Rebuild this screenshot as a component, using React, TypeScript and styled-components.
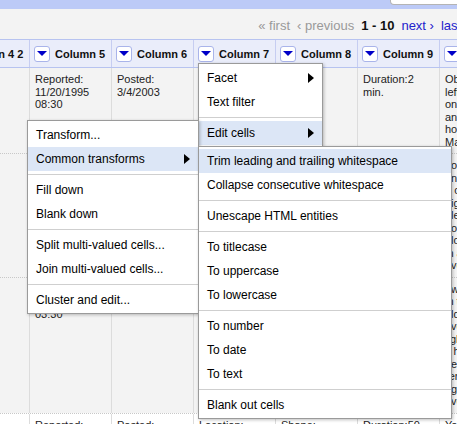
import React from 'react';
import styled, { createGlobalStyle } from 'styled-components';

const GlobalStyle = createGlobalStyle`
  html, body {
    margin: 0;
    padding: 0;
    background: #f3f3f3;
    overflow: hidden;
  }
  body {
    font-family: "Liberation Sans", Arial, sans-serif;
  }
`;

const Viewport = styled.div`
  position: relative;
  width: 480px;
  height: 424px;
  overflow: hidden;
  background: #f3f3f3;
`;

const TopBar = styled.div`
  height: 9px;
  background: #bccaf7;
  display: flex;
  justify-content: flex-end;
`;

const TabStub = styled.div`
  width: 88px;
  height: 4px;
  background: #fff;
  border: 1px solid #b4b4b4;
  border-top: none;
  border-bottom-left-radius: 4px;
`;

const Pager = styled.div`
  height: 30px;
  box-sizing: border-box;
  padding: 2px 8px 0 0;
  display: flex;
  justify-content: flex-end;
  align-items: center;
  gap: 7px;
  font-size: 13px;
  white-space: nowrap;
`;

const PagerLink = styled.span<{ $disabled?: boolean }>`
  color: ${(p) => (p.$disabled ? '#999' : '#2222cc')};
`;

const PagerRange = styled.span`
  font-weight: bold;
  color: #111;
`;

const GRID = '91px repeat(5, 82px) 240px';

const Table = styled.div`
  margin-left: -62px;
  width: 741px;
`;

const HeaderRow = styled.div`
  display: grid;
  grid-template-columns: ${GRID};
  background: #eaedfa;
  border-top: 1px solid #b7c3f0;
  border-bottom: 1px solid #b7c3f0;
`;

const HeaderCell = styled.div`
  height: 27px;
  display: flex;
  align-items: center;
  gap: 5px;
  padding-left: 4px;
  border-left: 1px solid #c6cdf1;
  font-size: 11px;
  font-weight: bold;
  color: #111;
  white-space: nowrap;
`;

const DropButton = styled.span`
  flex: none;
  width: 14px;
  height: 14px;
  background: #fff;
  border: 1px solid #a9b4ea;
  border-radius: 3px;
  display: flex;
  align-items: center;
  justify-content: center;
`;

const DownTriangle = styled.span`
  width: 0;
  height: 0;
  border-left: 5px solid transparent;
  border-right: 5px solid transparent;
  border-top: 5px solid #0000c8;
`;

const DataRow = styled.div<{ $white?: boolean; $dotted?: boolean }>`
  display: grid;
  grid-template-columns: ${GRID};
  background: ${(p) => (p.$white ? '#fff' : '#f3f3f3')};
  border-top: ${(p) => (p.$dotted ? '1px dotted #c8c8c8' : 'none')};
`;

const Cell = styled.div`
  border-left: 1px solid #dcdcdc;
  padding: 5px;
  font-size: 11px;
  line-height: 12.5px;
  color: #222;
  overflow: hidden;
`;

const Line = styled.div`
  white-space: nowrap;
`;

const Menu = styled.div<{ $z: number }>`
  position: absolute;
  box-sizing: border-box;
  background: #fff;
  border: 1px solid #9a9a9a;
  box-shadow: 1px 1px 3px rgba(0, 0, 0, 0.25);
  padding: 2px 0 1px;
  z-index: ${(p) => p.$z};
  font-size: 12px;
  color: #000;
`;

const MenuItem = styled.div<{ $active?: boolean }>`
  height: 24px;
  padding: 0 8px;
  display: flex;
  align-items: center;
  justify-content: space-between;
  white-space: nowrap;
  background: ${(p) => (p.$active ? '#dce6f6' : 'transparent')};
`;

const MenuSeparator = styled.div`
  height: 1px;
  margin: 3px 0;
  background: #cfcfcf;
`;

const RightArrow = styled.span`
  width: 0;
  height: 0;
  border-top: 5px solid transparent;
  border-bottom: 5px solid transparent;
  border-left: 6px solid #000;
`;

type Entry = { label: string; sub?: boolean; active?: boolean } | 'sep';

const columns = ['Column 4 2', 'Column 5', 'Column 6', 'Column 7', 'Column 8', 'Column 9', 'Column 10'];

const rows: { white?: boolean; dotted?: boolean; cells: (string | string[])[] }[] = [
  {
    cells: [
      '',
      'Reported: 11/20/1995 08:30',
      'Posted: 3/4/2003',
      'Location:',
      'Shape:',
      'Duration:2 min.',
      [
        'Observed bright lights',
        'left of the road while',
        'on the way home',
        'and they followed my',
        'house for ten minutes.',
        'Many witnesses saw it.',
      ],
    ],
  },
  {
    dotted: true,
    cells: [
      '',
      '',
      '',
      '',
      '',
      '',
      [
        'police later came by,',
        'unable to explain it.',
        '6 objects in a line,',
        'high above the trees.',
        'electric hum was heard',
        'nothing on radar.',
        'glowing orange disks',
        'in a V formation',
        'every few seconds.',
      ],
    ],
  },
  {
    dotted: true,
    cells: [
      '',
      'Reported: 11/21/1995 03:30',
      'Posted: 3/4/2003',
      'Location:',
      'Shape:',
      'Duration:10 min.',
      [
        'I was driving north',
        'in the rain on the',
        'old highway when I',
        'eventually pulled over.',
        'light got brighter',
        'it hovered silently',
        'near the water tower',
        'remained for a while',
        'right before dawn',
        'over the field.',
      ],
    ],
  },
  {
    white: true,
    dotted: true,
    cells: ['', 'Reported:', 'Posted:', 'Location:', 'Shape:', 'Duration:50', ['You won’t believe this']],
  },
];

const columnMenu: Entry[] = [
  { label: 'Facet', sub: true },
  { label: 'Text filter' },
  'sep',
  { label: 'Edit cells', sub: true, active: true },
];

const editCellsMenu: Entry[] = [
  { label: 'Transform...' },
  { label: 'Common transforms', sub: true, active: true },
  'sep',
  { label: 'Fill down' },
  { label: 'Blank down' },
  'sep',
  { label: 'Split multi-valued cells...' },
  { label: 'Join multi-valued cells...' },
  'sep',
  { label: 'Cluster and edit...' },
];

const transformsMenu: Entry[] = [
  { label: 'Trim leading and trailing whitespace', active: true },
  { label: 'Collapse consecutive whitespace' },
  'sep',
  { label: 'Unescape HTML entities' },
  'sep',
  { label: 'To titlecase' },
  { label: 'To uppercase' },
  { label: 'To lowercase' },
  'sep',
  { label: 'To number' },
  { label: 'To date' },
  { label: 'To text' },
  'sep',
  { label: 'Blank out cells' },
];

const PopupMenu: React.FC<{ entries: Entry[]; left: number; top: number; width: number; z: number }> = ({
  entries,
  left,
  top,
  width,
  z,
}) => (
  <Menu $z={z} style={{ left, top, width }}>
    {entries.map((e, i) =>
      e === 'sep' ? (
        <MenuSeparator key={i} />
      ) : (
        <MenuItem key={i} $active={e.active}>
          <span>{e.label}</span>
          {e.sub && <RightArrow />}
        </MenuItem>
      )
    )}
  </Menu>
);

const App: React.FC = () => (
  <>
    <GlobalStyle />
    <Viewport>
      <TopBar>
        <TabStub />
      </TopBar>
      <Pager>
        <PagerLink $disabled>« first</PagerLink>
        <PagerLink $disabled>‹ previous</PagerLink>
        <PagerRange>1 - 10</PagerRange>
        <PagerLink>next ›</PagerLink>
        <PagerLink>last »</PagerLink>
      </Pager>
      <Table>
        <HeaderRow>
          {columns.map((c) => (
            <HeaderCell key={c}>
              <DropButton>
                <DownTriangle />
              </DropButton>
              {c}
            </HeaderCell>
          ))}
        </HeaderRow>
        {rows.map((r, i) => (
          <DataRow key={i} $white={r.white} $dotted={r.dotted}>
            {r.cells.map((c, j) => (
              <Cell key={j}>{Array.isArray(c) ? c.map((l, k) => <Line key={k}>{l}</Line>) : c}</Cell>
            ))}
          </DataRow>
        ))}
      </Table>
      <PopupMenu entries={columnMenu} left={198} top={63} width={125} z={10} />
      <PopupMenu entries={editCellsMenu} left={27} top={120} width={172} z={11} />
      <PopupMenu entries={transformsMenu} left={198} top={146} width={254} z={12} />
    </Viewport>
  </>
);

export default App;
